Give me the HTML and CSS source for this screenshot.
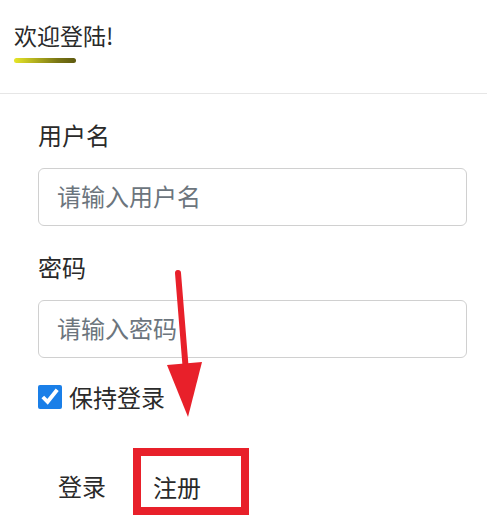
FILE: index.html
```html
<!DOCTYPE html>
<html lang="zh-CN">
  <head>
    <meta charset="UTF-8" />
    <meta name="viewport" content="width=device-width, initial-scale=1.0" />
    <title>登陆</title>
    <link rel="stylesheet" href="styles.css">
  </head>
  <body>
    <div class="header">
      <div class="title">欢迎登陆!</div>
      <div class="title-bar"></div>
    </div>

    <form class="login">
      <label class="field-label" for="user">用户名</label>
      <input class="field" id="user" type="text" placeholder="请输入用户名" />

      <label class="field-label" for="pwd">密码</label>
      <input class="field" id="pwd" type="password" placeholder="请输入密码" />

      <label class="remember">
        <input type="checkbox" checked />
        <span>保持登录</span>
      </label>

      <div class="actions">
        <span class="btn btn-login">登录</span>
        <span class="btn btn-reg">注册</span>
      </div>
    </form>

    <!-- 标注箭头 -->
    <svg class="arrow" width="487" height="527" viewBox="0 0 487 527">
      <line x1="178" y1="273" x2="186" y2="372" stroke="#e8202a" stroke-width="6" stroke-linecap="round" />
      <polygon points="167,365 202,362 188,417" fill="#e8202a" />
    </svg>
  </body>
</html>
```

FILE: styles.css
```css
* {
  margin: 0;
  padding: 0;
  box-sizing: border-box;
}
body {
  position: relative;
  width: 487px;
  height: 527px;
  background-color: #fff;
  color: #2a2a2a;
  font-family: "Noto Sans CJK SC", "Noto Sans", sans-serif;
  font-size: 24px;
  line-height: 36px;
  overflow: hidden;
}
.header {
  padding: 17px 0 30px 14px;
  border-bottom: 1px solid #e6e6e6;
}
.title {
  font-size: 23px;
}
.title-bar {
  width: 62px;
  height: 5px;
  margin-top: 5px;
  border-radius: 3px;
  background: linear-gradient(to right, #e6e628, #7a7614 70%, #5e5a10);
}
.login {
  display: flex;
  flex-direction: column;
  align-items: flex-start;
  padding: 23px 20px 0 38px;
}
.field-label {
  margin-bottom: 15px;
}
.field {
  width: 100%;
  height: 58px;
  margin-bottom: 23px;
  padding: 0 18px 4px;
  border: 1px solid #d0d0d0;
  border-radius: 6px;
  font-family: inherit;
  font-size: 24px;
  color: #333;
  outline: none;
}
.field::placeholder {
  color: #6c757d;
}
.remember {
  display: flex;
  align-items: center;
  gap: 7px;
  margin-top: -2px;
}
.remember input {
  width: 24px;
  height: 24px;
  accent-color: #1a7fe8;
}
.actions {
  display: flex;
  align-items: flex-end;
  gap: 7px;
  margin-top: 33px;
}
.btn {
  display: block;
  cursor: pointer;
}
.btn-login {
  padding: 0 20px 11px 20px;
}
.btn-reg {
  padding: 13px 40px 2px 12px;
  border: 8px solid #e8202a;
}
.arrow {
  position: absolute;
  left: 0;
  top: 0;
}
```
